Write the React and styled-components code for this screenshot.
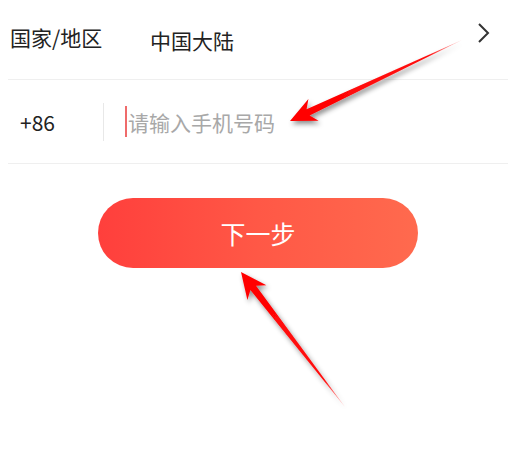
import React from "react"
import styled, { createGlobalStyle } from "styled-components"

const Global = createGlobalStyle`
  html, body {
    margin: 0;
    background: #fff;
    font-family: "Noto Sans CJK SC", "Noto Sans", sans-serif;
  }
  * { box-sizing: border-box; }
`

const Page = styled.div`
  position: relative;
  width: 513px;
  height: 454px;
  overflow: hidden;
  padding: 0 5px 0 8px;
`

const Row = styled.div`
  display: flex;
  align-items: center;
  height: ${(p) => p.$h}px;
  border-bottom: 1px solid #efefef;
`

const Label = styled.span`
  width: ${(p) => p.$w}px;
  padding-left: ${(p) => p.$pl || 0}px;
  font-size: 21px;
  color: #222;
  margin-top: ${(p) => p.$mt || 0}px;
  flex-shrink: 0;
`

const Value = styled.span`
  flex: 1;
  font-size: 21px;
  color: #222;
`

const Chevron = styled.svg`
  width: 14px;
  height: 22px;
  margin: -14px 17px 0 0;
`

const Divider = styled.span`
  width: 1px;
  height: 38px;
  background: #e8e8e8;
  margin: 0 21px 0 0;
`

const Caret = styled.span`
  width: 2px;
  height: 31px;
  background: #ef6b6b;
  margin-right: 1px;
`

const Placeholder = styled.span`
  font-size: 21px;
  color: #a8a8a8;
`

const ButtonWrap = styled.div`
  display: flex;
  padding: 34px 0 0 90px;
`

const NextButton = styled.button`
  width: 320px;
  height: 70px;
  border: none;
  border-radius: 35px;
  background: linear-gradient(90deg, #ff3f3c 0%, #ff5846 50%, #ff6a4e 100%);
  color: #fff;
  font-family: inherit;
  font-size: 25px;
`

const Overlay = styled.svg`
  position: absolute;
  left: 0;
  top: 0;
  pointer-events: none;
`

const arrowPoints = (tail, tip, headLen, headW, shaftW) => {
  const dx = tip[0] - tail[0]
  const dy = tip[1] - tail[1]
  const len = Math.hypot(dx, dy)
  const ux = dx / len
  const uy = dy / len
  const nx = -uy
  const ny = ux
  const bx = tip[0] - ux * headLen
  const by = tip[1] - uy * headLen
  const nb = [bx + ux * 6, by + uy * 6]
  const pts = [
    [tail[0], tail[1]],
    [nb[0] + nx * shaftW, nb[1] + ny * shaftW],
    [bx + nx * headW, by + ny * headW],
    tip,
    [bx - nx * headW, by - ny * headW],
    [nb[0] - nx * shaftW, nb[1] - ny * shaftW],
  ]
  return pts.map((p) => p.map((v) => v.toFixed(1)).join(",")).join(" ")
}

const Arrows = () => (
  <Overlay width="513" height="454">
    <defs>
      <filter id="sh" x="-20%" y="-20%" width="140%" height="140%">
        <feDropShadow dx="2" dy="3" stdDeviation="2.5" floodColor="#000" floodOpacity="0.45" />
      </filter>
      <linearGradient id="fade1" x1="462" y1="40" x2="290" y2="121" gradientUnits="userSpaceOnUse">
        <stop offset="0" stopColor="#ff3030" stopOpacity="0.3" />
        <stop offset="0.2" stopColor="#ff1010" />
        <stop offset="1" stopColor="#ff0000" />
      </linearGradient>
      <linearGradient id="fade2" x1="345" y1="407" x2="241" y2="272" gradientUnits="userSpaceOnUse">
        <stop offset="0" stopColor="#ff3030" stopOpacity="0.3" />
        <stop offset="0.2" stopColor="#ff1010" />
        <stop offset="1" stopColor="#ff0000" />
      </linearGradient>
    </defs>
    <polygon points={arrowPoints([462, 40], [290, 121], 26, 12, 3.5)} fill="url(#fade1)" filter="url(#sh)" />
    <polygon points={arrowPoints([345, 407], [241, 272], 26, 12, 3.5)} fill="url(#fade2)" filter="url(#sh)" />
  </Overlay>
)

const App = () => (
  <Page>
    <Global />
    <Row $h={80}>
      <Label $w={142} $pl={2} $mt={-6}>国家/地区</Label>
      <Value>中国大陆</Value>
      <Chevron viewBox="0 0 14 22">
        <path d="M2 2 L11 11 L2 20" fill="none" stroke="#333" strokeWidth="2" />
      </Chevron>
    </Row>
    <Row $h={84}>
      <Label $w={95} $pl={12}>+86</Label>
      <Divider />
      <Caret />
      <Placeholder>请输入手机号码</Placeholder>
    </Row>
    <ButtonWrap>
      <NextButton>下一步</NextButton>
    </ButtonWrap>
    <Arrows />
  </Page>
)

export default App
